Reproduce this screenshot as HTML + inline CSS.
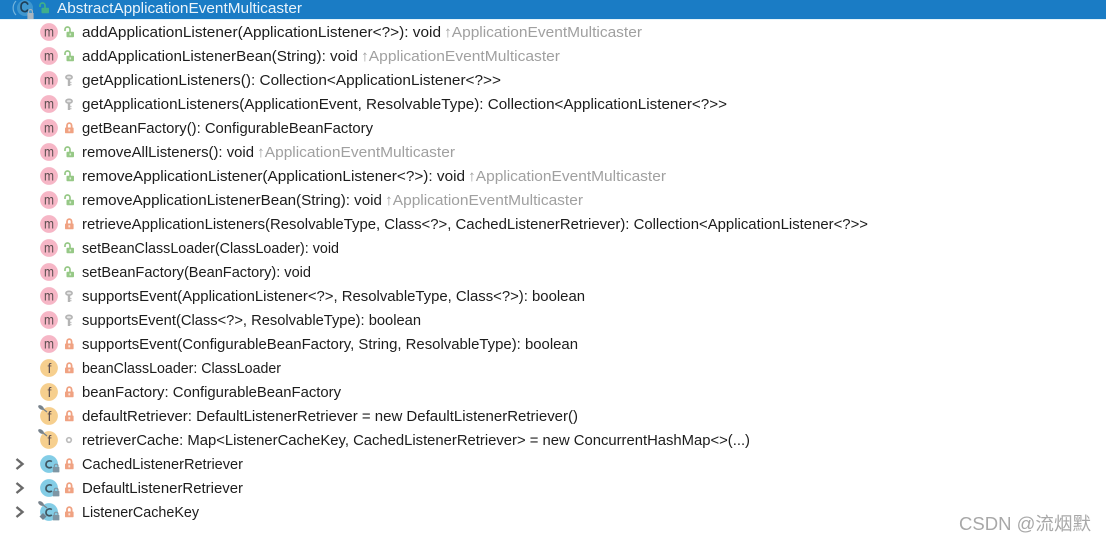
<!DOCTYPE html>
<html><head><meta charset="utf-8"><style>
html,body{margin:0;padding:0;background:#fff;width:1106px;height:542px;overflow:hidden}
svg{display:block}
text{font-family:"Liberation Sans",sans-serif;font-size:15.2px}
.t{fill:#1c1c1c}.g{fill:#a0a0a0}
text.i{font-size:14px;fill:#5c4e50;text-anchor:middle}
</style></head><body>
<svg width="1106" height="542" viewBox="0 0 1106 542" xmlns="http://www.w3.org/2000/svg">
<defs>
<g id="m"><circle cx="49" cy="0" r="8.9" fill="#f6b6c6"/><text class="i" x="49" y="4.3" textLength="10" lengthAdjust="spacingAndGlyphs">m</text></g>
<g id="f"><circle cx="49" cy="0" r="8.9" fill="#f6cf8e"/><text class="i" x="49.500" y="5">f</text></g>
<g id="c"><circle cx="49" cy="0" r="8.9" fill="#83cde6"/><path d="M51.800-2.400C50-4 46-3 46 .5C46 3.700 50 4.600 51.800 2.900" fill="none" stroke="#3f5560" stroke-width="1.700"/></g>
<g id="lg"><path d="M65-1V-2.500C65-5.800 70-5.800 70-2.500V0" fill="none" stroke="#96c886" stroke-width="1.700"/><rect x="66.500" y="-.2" width="7.500" height="5.400" rx=".8" fill="#96c886"/><rect x="69.500" y="1.400" width="1.600" height="2" fill="#dcefd5"/></g>
<g id="lo"><path d="M67-.5V-2.400C67-5.700 71.600-5.700 71.600-2.400V-.5" fill="none" stroke="#f0a282" stroke-width="1.800"/><rect x="65" y="-.5" width="8.600" height="5.800" rx=".8" fill="#f0a282"/><rect x="68.400" y="1.200" width="1.800" height="2.200" fill="#fde3d8"/></g>
<g id="k"><ellipse cx="69" cy="-2.800" rx="3.100" ry="1.900" fill="#e6e6e6" stroke="#b4b4b4" stroke-width="1.600"/><path d="M69-1V6" fill="none" stroke="#b4b4b4" stroke-width="2.400"/><path d="M70 2.500H71.500M70 4.600H71.500" stroke="#c4c4c4" stroke-width="1.200"/></g>
<circle id="o" cx="69" cy="0" r="2.300" fill="none" stroke="#bcbcbc" stroke-width="1.700"/>
<g id="p"><ellipse cx="41" cy="-8.500" rx="3.200" ry="1.900" transform="rotate(35 41 -8.500)" fill="#78838c"/><path d="M42-8L47-4" stroke="#78838c" stroke-width="1.300"/></g>
<path id="a" d="M16.500-5L22.500 0L16.500 5" fill="none" stroke="#6a6a6a" stroke-width="2.400"/>
<g id="l2"><path d="M54.300 3V1.900C54.300-.4 58-.4 58 1.900V3" fill="none" stroke="#7e96a4" stroke-width="1.200"/><rect x="52.800" y="3" width="6.600" height="5.400" rx=".6" fill="#7e96a4"/></g>
</defs>

<rect x="0" y="0" width="1106" height="19" fill="#1a7cc5"/>
<rect x="0" y="19" width="1106" height="1" fill="#e4f4fa"/>
<circle cx="25" cy="8" r="8" fill="#3f97cf"/>
<path d="M16 1A10 10 0 0 0 16 15" fill="none" stroke="#74b4dc" stroke-width="1.200"/>
<path d="M28 4.600C26 .5 21 1.400 21 7C21 12 26 13 28 9.600" fill="none" stroke="#1f3f58" stroke-width="1.700"/>
<g transform="translate(0,10)"><path d="M28.600 3V1.400C28.600-1 32.400-1 32.400 1.400V3" fill="none" stroke="#a8b6c0" stroke-width="1.100"/><rect x="27.400" y="3" width="6.200" height="6" fill="#a8b6c0"/></g>
<g transform="translate(-25,8)"><path d="M65-1V-2.500C65-5.800 70-5.800 70-2.500V0" fill="none" stroke="#3fae8c" stroke-width="1.700"/><rect x="66.500" y="-.2" width="7.500" height="5.400" rx=".8" fill="#3fae8c"/></g>
<text x="57" y="13" fill="#eaf4fb" textLength="245" lengthAdjust="spacingAndGlyphs">AbstractApplicationEventMulticaster</text>

<use href="#m" y="32"/><use href="#lg" y="32"/><text class="t" x="82" y="37" textLength="359" lengthAdjust="spacingAndGlyphs">addApplicationListener(ApplicationListener&lt;?&gt;): void</text><text class="g" x="444" y="37" textLength="198" lengthAdjust="spacingAndGlyphs">↑ApplicationEventMulticaster</text>
<use href="#m" y="56"/><use href="#lg" y="56"/><text class="t" x="82" y="61" textLength="276" lengthAdjust="spacingAndGlyphs">addApplicationListenerBean(String): void</text><text class="g" x="361" y="61" textLength="199" lengthAdjust="spacingAndGlyphs">↑ApplicationEventMulticaster</text>
<use href="#m" y="80"/><use href="#k" y="80"/><text class="t" x="82" y="85" textLength="419" lengthAdjust="spacingAndGlyphs">getApplicationListeners(): Collection&lt;ApplicationListener&lt;?&gt;&gt;</text>
<use href="#m" y="104"/><use href="#k" y="104"/><text class="t" x="82" y="109" textLength="645" lengthAdjust="spacingAndGlyphs">getApplicationListeners(ApplicationEvent, ResolvableType): Collection&lt;ApplicationListener&lt;?&gt;&gt;</text>
<use href="#m" y="128"/><use href="#lo" y="128"/><text class="t" x="82" y="133" textLength="291" lengthAdjust="spacingAndGlyphs">getBeanFactory(): ConfigurableBeanFactory</text>
<use href="#m" y="152"/><use href="#lg" y="152"/><text class="t" x="82" y="157" textLength="172" lengthAdjust="spacingAndGlyphs">removeAllListeners(): void</text><text class="g" x="257" y="157" textLength="198" lengthAdjust="spacingAndGlyphs">↑ApplicationEventMulticaster</text>
<use href="#m" y="176"/><use href="#lg" y="176"/><text class="t" x="82" y="181" textLength="383" lengthAdjust="spacingAndGlyphs">removeApplicationListener(ApplicationListener&lt;?&gt;): void</text><text class="g" x="468" y="181" textLength="198" lengthAdjust="spacingAndGlyphs">↑ApplicationEventMulticaster</text>
<use href="#m" y="200"/><use href="#lg" y="200"/><text class="t" x="82" y="205" textLength="300" lengthAdjust="spacingAndGlyphs">removeApplicationListenerBean(String): void</text><text class="g" x="385" y="205" textLength="198" lengthAdjust="spacingAndGlyphs">↑ApplicationEventMulticaster</text>
<use href="#m" y="224"/><use href="#lo" y="224"/><text class="t" x="82" y="229" textLength="786" lengthAdjust="spacingAndGlyphs">retrieveApplicationListeners(ResolvableType, Class&lt;?&gt;, CachedListenerRetriever): Collection&lt;ApplicationListener&lt;?&gt;&gt;</text>
<use href="#m" y="248"/><use href="#lg" y="248"/><text class="t" x="82" y="253" textLength="257" lengthAdjust="spacingAndGlyphs">setBeanClassLoader(ClassLoader): void</text>
<use href="#m" y="272"/><use href="#lg" y="272"/><text class="t" x="82" y="277" textLength="229" lengthAdjust="spacingAndGlyphs">setBeanFactory(BeanFactory): void</text>
<use href="#m" y="296"/><use href="#k" y="296"/><text class="t" x="82" y="301" textLength="503" lengthAdjust="spacingAndGlyphs">supportsEvent(ApplicationListener&lt;?&gt;, ResolvableType, Class&lt;?&gt;): boolean</text>
<use href="#m" y="320"/><use href="#k" y="320"/><text class="t" x="82" y="325" textLength="339" lengthAdjust="spacingAndGlyphs">supportsEvent(Class&lt;?&gt;, ResolvableType): boolean</text>
<use href="#m" y="344"/><use href="#lo" y="344"/><text class="t" x="82" y="349" textLength="496" lengthAdjust="spacingAndGlyphs">supportsEvent(ConfigurableBeanFactory, String, ResolvableType): boolean</text>
<use href="#f" y="368"/><use href="#lo" y="368"/><text class="t" x="82" y="373" textLength="199" lengthAdjust="spacingAndGlyphs">beanClassLoader: ClassLoader</text>
<use href="#f" y="392"/><use href="#lo" y="392"/><text class="t" x="82" y="397" textLength="259" lengthAdjust="spacingAndGlyphs">beanFactory: ConfigurableBeanFactory</text>
<use href="#f" y="416"/><use href="#p" y="416"/><use href="#lo" y="416"/><text class="t" x="82" y="421" textLength="496" lengthAdjust="spacingAndGlyphs">defaultRetriever: DefaultListenerRetriever = new DefaultListenerRetriever()</text>
<use href="#f" y="440"/><use href="#p" y="440"/><use href="#o" y="440"/><text class="t" x="82" y="445" textLength="668" lengthAdjust="spacingAndGlyphs">retrieverCache: Map&lt;ListenerCacheKey, CachedListenerRetriever&gt; = new ConcurrentHashMap&lt;&gt;(...)</text>
<use href="#a" y="464"/><use href="#c" y="464"/><use href="#l2" y="464"/><use href="#lo" y="464"/><text class="t" x="82" y="469" textLength="161" lengthAdjust="spacingAndGlyphs">CachedListenerRetriever</text>
<use href="#a" y="488"/><use href="#c" y="488"/><use href="#l2" y="488"/><use href="#lo" y="488"/><text class="t" x="82" y="493" textLength="161" lengthAdjust="spacingAndGlyphs">DefaultListenerRetriever</text>
<use href="#a" y="512"/><use href="#c" y="512"/><use href="#p" y="512"/><use href="#l2" y="512"/><path d="M43 513L46.500 516.500L43 520L39.500 516.500Z" fill="#6f8290"/><use href="#lo" y="512"/><text class="t" x="82" y="517" textLength="117" lengthAdjust="spacingAndGlyphs">ListenerCacheKey</text>

<text x="959" y="530" style="font-family:'Liberation Sans','Noto Sans CJK SC',sans-serif;font-size:18px" fill="#a8a8a8" textLength="132" lengthAdjust="spacingAndGlyphs">CSDN @流烟默</text>
</svg>
</body></html>
